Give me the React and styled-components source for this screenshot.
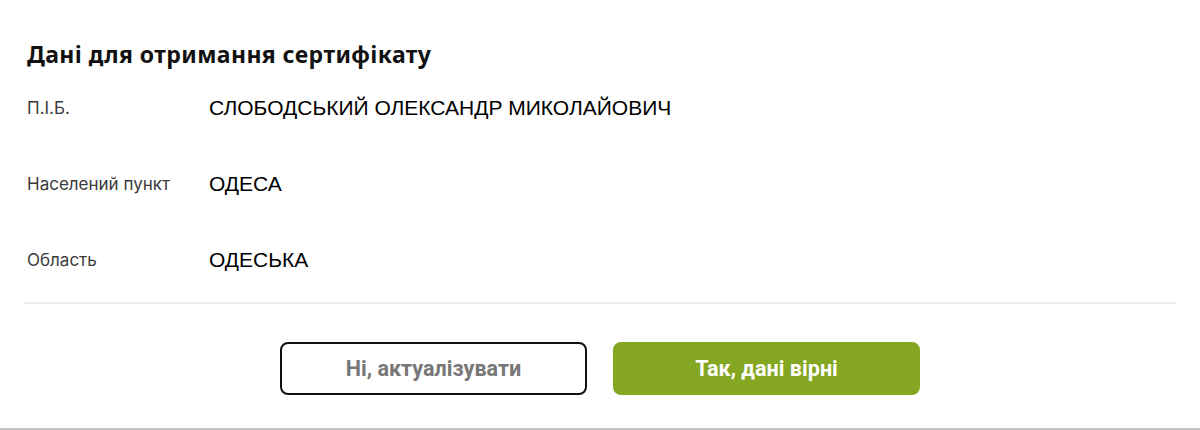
import React from 'react';
import styled, { createGlobalStyle } from 'styled-components';

const GlobalStyle = createGlobalStyle`
  * {
    box-sizing: border-box;
  }
  body {
    margin: 0;
    background: #fff;
    font-family: Roboto, "Liberation Sans", Arial, sans-serif;
  }
`;

const fields = [
  { label: 'П.І.Б.', value: 'СЛОБОДСЬКИЙ ОЛЕКСАНДР МИКОЛАЙОВИЧ' },
  { label: 'Населений пункт', value: 'ОДЕСА' },
  { label: 'Область', value: 'ОДЕСЬКА' },
];

const App = () => {
  return (
    <>
      <GlobalStyle />
      <Page>
        <Title>Дані для отримання сертифікату</Title>
        <List>
          {fields.map(f => (
            <Row key={f.label}>
              <Label>{f.label}</Label>
              <Value>{f.value}</Value>
            </Row>
          ))}
        </List>
        <Divider />
        <Actions>
          <Button>Ні, актуалізувати</Button>
          <Button primary>Так, дані вірні</Button>
        </Actions>
      </Page>
    </>
  );
};

const Page = styled.div`
  width: 1200px;
  height: 430px;
  padding: 38px 24px 0 24px;
  border-bottom: 2px solid #c4c4c4;
  display: flex;
  flex-direction: column;
`;

const Title = styled.h2`
  margin: 0 0 0 3px;
  font-family: "Noto Sans", Inter, sans-serif;
  font-size: 23px;
  font-weight: 700;
  line-height: 32px;
  color: #111;
  letter-spacing: 0.4px;
`;

const List = styled.div`
  display: flex;
  flex-direction: column;
`;

const Row = styled.div`
  display: flex;
  align-items: center;
  height: 76px;
  padding-left: 3px;
`;

const Label = styled.span`
  width: 182px;
  font-family: Inter, "Noto Sans", sans-serif;
  font-size: 17px;
  color: #3a3a3a;
`;

const Value = styled.span`
  font-family: "Liberation Sans", Arial, sans-serif;
  font-size: 21px;
  color: #000;
`;

const Divider = styled.div`
  height: 2px;
  margin-top: 4px;
  background: #ececec;
`;

const Actions = styled.div`
  display: flex;
  justify-content: center;
  gap: 26px;
  margin-top: 38px;
`;

const Button = styled.button`
  width: 307px;
  height: 53px;
  border-radius: 8px;
  font-family: Roboto, "Liberation Sans", sans-serif;
  font-size: 21.6px;
  font-weight: 700;
  cursor: pointer;
  border: ${({ primary }) => (primary ? '2px solid #84a620' : '2px solid #111')};
  background: ${({ primary }) => (primary ? '#84a620' : '#fff')};
  color: ${({ primary }) => (primary ? '#fff' : '#777')};
`;

export default App;
